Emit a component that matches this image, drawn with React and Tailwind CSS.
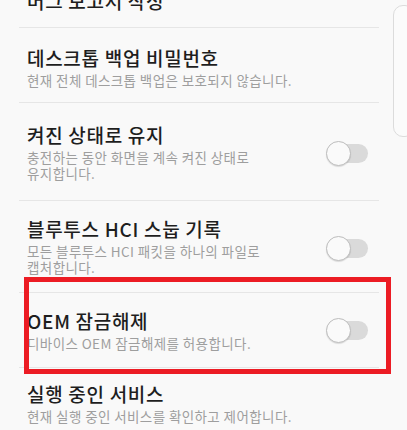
import React from "react";

const font = { fontFamily: '"Noto Sans CJK KR", "Noto Sans", sans-serif' };

function Toggle() {
  return (
    <div className="relative w-[42px] h-[25px] flex items-center shrink-0">
      <div className="absolute left-[1px] right-0 h-[19px] rounded-full bg-[#dadada]" />
      <div className="absolute left-0 top-0 w-[25px] h-[25px] rounded-full bg-[#fafafa] border border-[#bdbdbd] shadow-[0_1px_1px_rgba(0,0,0,0.12)]" />
    </div>
  );
}

function Divider() {
  return <div className="ml-[19px] w-[360px] h-px bg-[#e6e6e6]" />;
}

const T = "text-[19px] leading-[24px] tracking-[0.7px] text-[#1e1e1e] font-medium whitespace-nowrap";
const S = "mt-[3px] text-[13.5px] leading-[15.5px] tracking-[0.4px] text-[#9e9e9e] whitespace-nowrap";

function Sub2({ a, b }) {
  return (
    <div className="mt-[2px] flex flex-col text-[13.5px] leading-[16px] tracking-[0.4px] text-[#9e9e9e] whitespace-nowrap">
      <span className="block h-[16px]">{a}</span>
      <span className="block h-[16px]">{b}</span>
    </div>
  );
}

export default function App() {
  return (
    <div className="relative w-[407px] h-[430px] overflow-hidden bg-[#f9f9f9]" style={font}>
      {/* partially visible first row */}
      <div className="h-[27px] flex items-end pl-[27px] pb-[14px]">
        <div className={T}>버그 보고서 작성</div>
      </div>
      <Divider />
      {/* 데스크톱 백업 비밀번호 */}
      <div className="h-[74px] pl-[27px] pt-[18px]">
        <div className={T}>데스크톱 백업 비밀번호</div>
        <div className={S}>현재 전체 데스크톱 백업은 보호되지 않습니다.</div>
      </div>
      <Divider />
      {/* 켜진 상태로 유지 */}
      <div className="h-[97px] pl-[27px] pr-[39px] pt-[20px] flex items-start">
        <div className="flex-1">
          <div className={T}>켜진 상태로 유지</div>
          <Sub2 a="충전하는 동안 화면을 계속 켜진 상태로" b="유지합니다." />
        </div>
        <div className="mt-[18px]"><Toggle /></div>
      </div>
      <Divider />
      {/* 블루투스 HCI 스눕 기록 */}
      <div className="h-[91px] pl-[27px] pr-[39px] pt-[16px] flex items-start">
        <div className="flex-1">
          <div className={T}>블루투스 HCI 스눕 기록</div>
          <Sub2 a="모든 블루투스 HCI 패킷을 하나의 파일로" b="캡처합니다." />
        </div>
        <div className="mt-[19px]"><Toggle /></div>
      </div>
      <div className="relative">
        <Divider />
        {/* OEM 잠금해제 */}
        <div className="h-[74px] pl-[27px] pr-[39px] pt-[16px] flex items-start">
          <div className="flex-1">
            <div className={T}>OEM 잠금해제</div>
            <div className={S}>디바이스 OEM 잠금해제를 허용합니다.</div>
          </div>
          <div className="mt-[9px]"><Toggle /></div>
        </div>
        <Divider />
        <div className="absolute left-[24px] top-[-15px] w-[367px] h-[97px] border-[5px] border-[#ec1c24]" />
      </div>
      {/* 실행 중인 서비스 */}
      <div className="pl-[27px] pt-[14px]">
        <div className={T}>실행 중인 서비스</div>
        <div className={S}>현재 실행 중인 서비스를 확인하고 제어합니다.</div>
      </div>
      {/* fast scroller thumb */}
      <div className="absolute left-[393px] top-[5px] w-[22px] h-[132px] rounded-[10px] border border-[#dcdcdc] bg-[#fbfbfb]" />
    </div>
  );
}
